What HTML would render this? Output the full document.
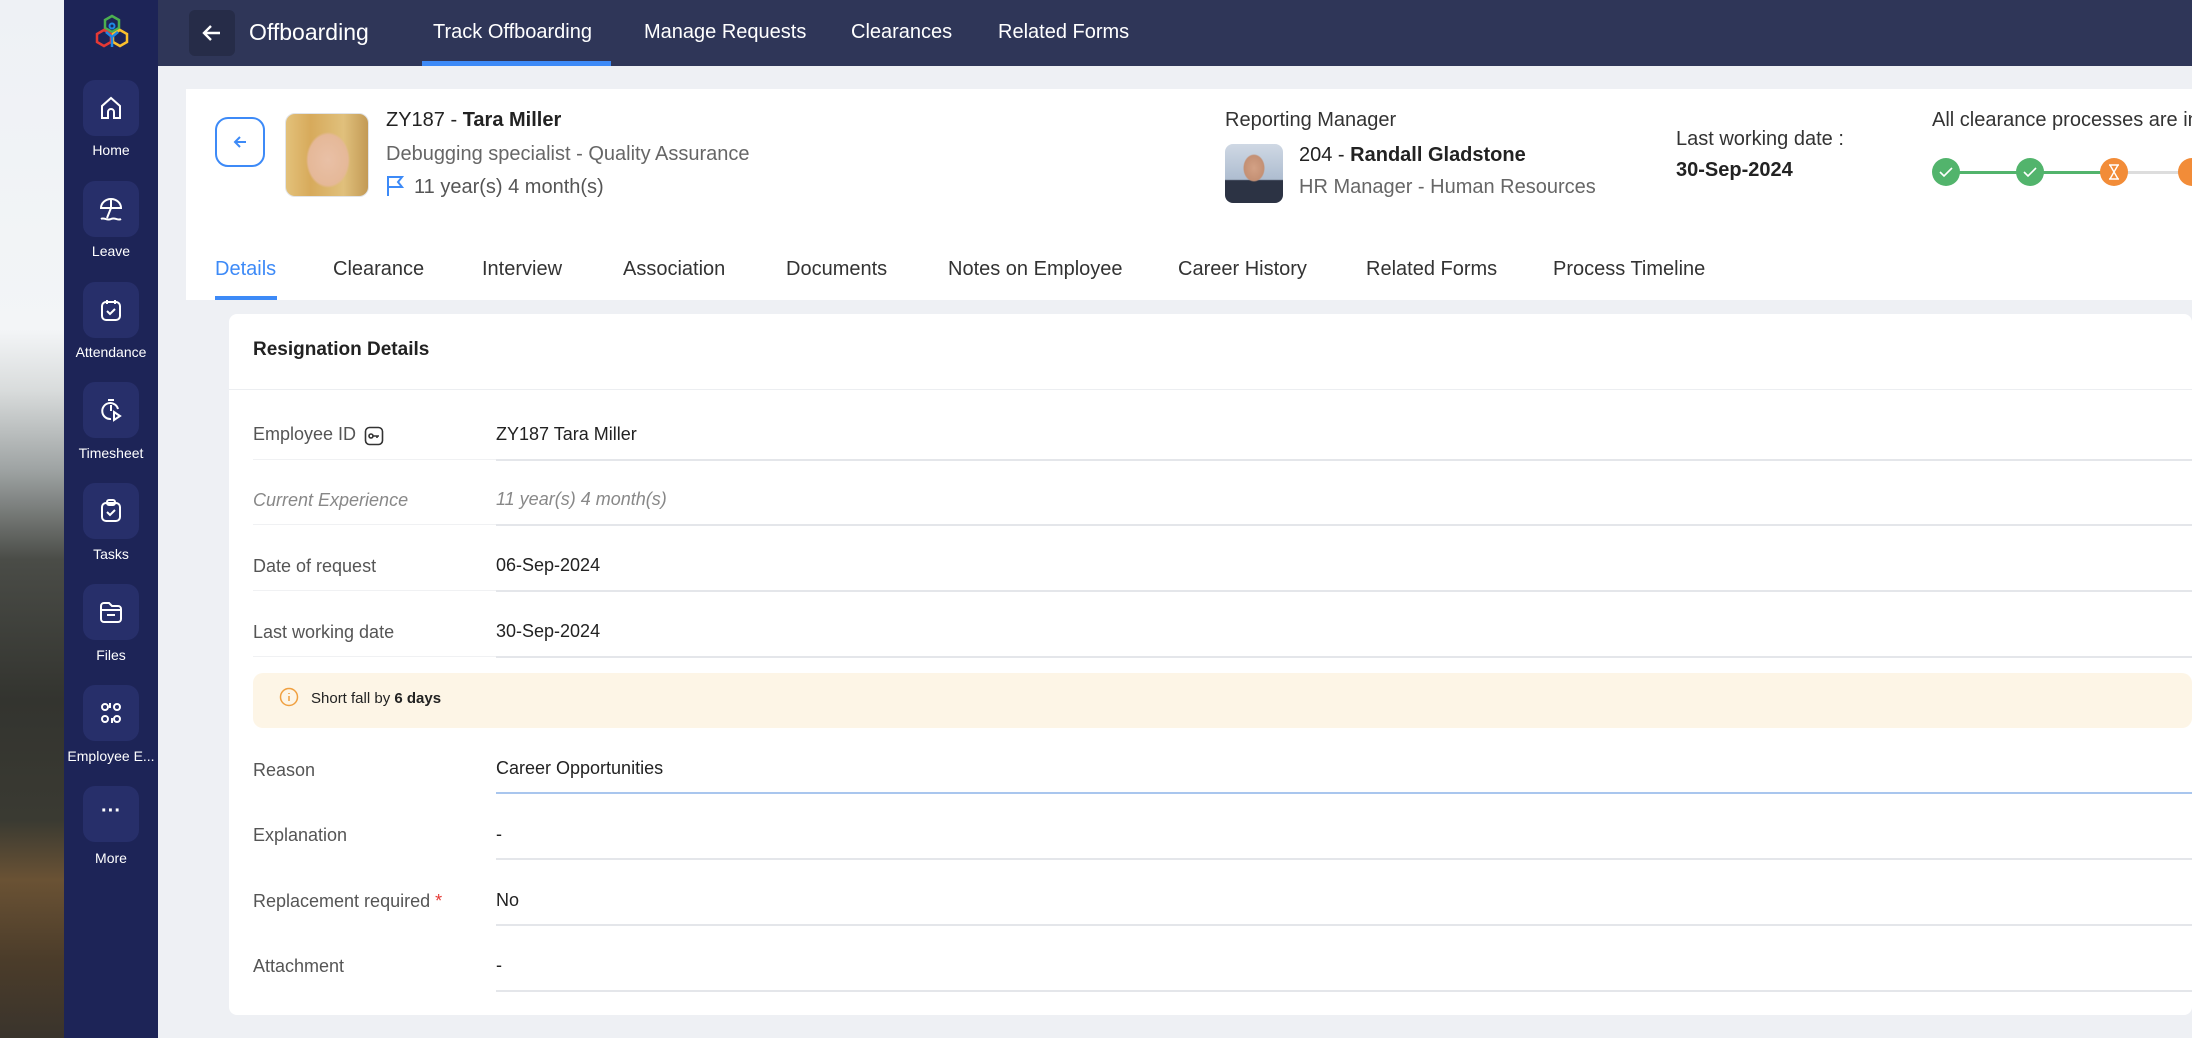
<!DOCTYPE html>
<html><head><meta charset="utf-8"><style>
*{margin:0;padding:0;box-sizing:border-box}
body{width:2192px;height:1038px;overflow:hidden;position:relative;font-family:"Liberation Sans",sans-serif;background:#eef0f4}
.a{position:absolute}
.bgimg{left:0;top:0;width:64px;height:1038px;background:linear-gradient(180deg,#eef1f5 0,#f3f5f7 330px,#d9dcdc 390px,#9ea3a3 470px,#4a4c47 560px,#33342f 700px,#3a3a32 820px,#6a5234 880px,#4b3c2a 960px,#3a342c 1038px)}
.side{left:64px;top:0;width:94px;height:1038px;background:#1d2457}
.ib{left:83px;width:56px;height:56px;border-radius:12px;background:#272f6a}
.lbl{left:64px;width:94px;text-align:center;color:#fff;font-size:14px}
.top{left:158px;top:0;width:2034px;height:66px;background:#2f3658}
.tt{color:#fff;font-size:20px;top:21px}
.card{left:186px;top:89px;width:2006px;height:211px;background:#fff}
.tab{top:258px;font-size:20px;color:#333}
.row{left:253px;font-size:18px;color:#555}
.val{left:496px;font-size:18px;color:#222}
.ln{height:1px;background:#e4e6ea}
</style></head><body>
<div class="a bgimg"></div>
<div class="a side"></div>
<svg class="a" style="left:95px;top:14px" width="34" height="38" viewBox="0 0 34 38"><path d="M17 2l7 4v8l-7 4-7-4V6z" fill="none" stroke="#4caf50" stroke-width="2.5"/><path d="M9 16l7 4v8l-7 4-7-4v-8z" fill="none" stroke="#e53935" stroke-width="2.5"/><path d="M25 16l7 4v8l-7 4-7-4v-8z" fill="none" stroke="#fbc02d" stroke-width="2.5"/><circle cx="17" cy="12" r="2.5" fill="none" stroke="#1e88e5" stroke-width="2"/><path d="M11 18l6 5 6-5M17 23v10" fill="none" stroke="#1e88e5" stroke-width="2.5"/></svg>
<div class="a ib" style="top:80px"></div><svg class="a" style="left:98px;top:95px" width="26" height="26" viewBox="0 0 26 26" fill="none" stroke="#fff" stroke-width="2"><path d="M4 23V11l9-8 9 8v12h-6v-6a3 3 0 0 0-6 0v6z"/></svg><div class="a lbl" style="top:142px">Home</div>
<div class="a ib" style="top:181px"></div><svg class="a" style="left:98px;top:196px" width="26" height="26" viewBox="0 0 26 26" fill="none" stroke="#fff" stroke-width="2"><path d="M3 12a10 9 0 0 1 20 0zM13 3v9M13 12l-4 10M3 23c3-2 6 2 10 0s7 2 10 0"/></svg><div class="a lbl" style="top:243px">Leave</div>
<div class="a ib" style="top:282px"></div><svg class="a" style="left:98px;top:297px" width="26" height="26" viewBox="0 0 26 26" fill="none" stroke="#fff" stroke-width="2"><rect x="4" y="5" width="18" height="18" rx="4"/><path d="M9 3v4M17 3v4M9 14l3 3 5-5"/></svg><div class="a lbl" style="top:344px">Attendance</div>
<div class="a ib" style="top:382px"></div><svg class="a" style="left:98px;top:397px" width="26" height="26" viewBox="0 0 26 26" fill="none" stroke="#fff" stroke-width="2"><path d="M20 12a8 8 0 1 0-7 10M10 3h6M13 8v6M16 15l6 4-6 4z"/></svg><div class="a lbl" style="top:445px">Timesheet</div>
<div class="a ib" style="top:483px"></div><svg class="a" style="left:98px;top:498px" width="26" height="26" viewBox="0 0 26 26" fill="none" stroke="#fff" stroke-width="2"><rect x="4" y="5" width="18" height="18" rx="4"/><rect x="9" y="2" width="8" height="5" rx="2"/><path d="M9 14l3 3 5-5"/></svg><div class="a lbl" style="top:546px">Tasks</div>
<div class="a ib" style="top:584px"></div><svg class="a" style="left:98px;top:599px" width="26" height="26" viewBox="0 0 26 26" fill="none" stroke="#fff" stroke-width="2"><path d="M3 20V7a3 3 0 0 1 3-3h5l3 3h6a3 3 0 0 1 3 3v10a3 3 0 0 1-3 3H6a3 3 0 0 1-3-3zM3 11h20M9 16h8"/></svg><div class="a lbl" style="top:647px">Files</div>
<div class="a ib" style="top:685px"></div><svg class="a" style="left:98px;top:700px" width="26" height="26" viewBox="0 0 26 26" fill="none" stroke="#fff" stroke-width="2"><circle cx="7" cy="7" r="3"/><circle cx="19" cy="7" r="3"/><circle cx="7" cy="19" r="3"/><circle cx="19" cy="19" r="3"/><path d="M12 3v5M14 23v-5"/></svg><div class="a lbl" style="top:748px">Employee E...</div>
<div class="a ib" style="top:786px"></div><div class="a" style="left:64px;width:94px;top:800px;text-align:center;color:#fff;font-size:20px;font-weight:bold">···</div><div class="a lbl" style="top:850px">More</div>

<div class="a top"></div>
<div class="a" style="left:189px;top:10px;width:46px;height:46px;border-radius:6px;background:#262c48"></div>
<svg class="a" style="left:200px;top:21px" width="24" height="24" viewBox="0 0 24 24" fill="none" stroke="#fff" stroke-width="2.4"><path d="M20 12H5M11 5l-7 7 7 7"/></svg>
<div class="a tt" style="left:249px;top:19px;font-size:23px">Offboarding</div>
<div class="a tt" style="left:433px">Track Offboarding</div>
<div class="a" style="left:422px;top:61px;width:189px;height:5px;background:#3d8af7"></div>
<div class="a tt" style="left:644px">Manage Requests</div>
<div class="a tt" style="left:851px">Clearances</div>
<div class="a tt" style="left:998px">Related Forms</div>

<div class="a card"></div>
<div class="a" style="left:215px;top:117px;width:50px;height:50px;border:2px solid #3d8af7;border-radius:13px"></div>
<svg class="a" style="left:231px;top:133px" width="18" height="18" viewBox="0 0 18 18" fill="none" stroke="#3d8af7" stroke-width="2"><path d="M15 9H4M9 4L4 9l5 5"/></svg>
<div class="a" style="left:285px;top:113px;width:84px;height:84px;border-radius:10px;border:1px solid #e2e4e8;background:radial-gradient(ellipse 22px 28px at 42px 46px,#e9c0a6 0,#e5b898 90%,transparent 100%),linear-gradient(90deg,#e3c17a,#d7aa5b 30%,#e0c07c 70%,#c39a55);overflow:hidden"></div>
<div class="a" style="left:386px;top:109px;font-size:20px;color:#222">ZY187 - <b style="font-weight:600">Tara Miller</b></div>
<div class="a" style="left:386px;top:143px;font-size:20px;color:#666">Debugging specialist - Quality Assurance</div>
<svg class="a" style="left:386px;top:174px" width="20" height="24" viewBox="0 0 20 24" fill="none" stroke="#3d8af7" stroke-width="2"><path d="M2 2v20M2 3h14l-4 5 4 5H2"/></svg>
<div class="a" style="left:414px;top:176px;font-size:20px;color:#555">11 year(s) 4 month(s)</div>

<div class="a" style="left:1225px;top:109px;font-size:20px;color:#333">Reporting Manager</div>
<div class="a" style="left:1225px;top:144px;width:58px;height:59px;border-radius:8px;background:radial-gradient(ellipse 11px 14px at 29px 24px,#d3a185 0,#c49074 90%,transparent 100%),linear-gradient(180deg,#cfd8e4 0,#aebdd0 60%,#2c3344 62%,#2c3344 100%)"></div>
<div class="a" style="left:1299px;top:144px;font-size:20px;color:#222">204 - <b style="font-weight:600">Randall Gladstone</b></div>
<div class="a" style="left:1299px;top:176px;font-size:20px;color:#666">HR Manager - Human Resources</div>
<div class="a" style="left:1676px;top:128px;font-size:20px;color:#333">Last working date :</div>
<div class="a" style="left:1676px;top:159px;font-size:20px;color:#222;font-weight:bold">30-Sep-2024</div>
<div class="a" style="left:1932px;top:109px;font-size:20px;color:#333;white-space:nowrap">All clearance processes are in</div>
<div class="a" style="left:1946px;top:171px;width:84px;height:3px;background:#52b46c"></div>
<div class="a" style="left:2030px;top:171px;width:84px;height:3px;background:#52b46c"></div>
<div class="a" style="left:2114px;top:171px;width:80px;height:3px;background:#ddd"></div>
<svg class="a" style="left:1932px;top:158px" width="260" height="30" viewBox="0 0 260 30"><circle cx="14" cy="14" r="14" fill="#52b46c"/><path d="M8 14l4 4 8-8" stroke="#fff" stroke-width="1.6" fill="none"/><circle cx="98" cy="14" r="14" fill="#52b46c"/><path d="M92 14l4 4 8-8" stroke="#fff" stroke-width="1.6" fill="none"/><circle cx="182" cy="14" r="14" fill="#f28c38"/><path d="M177 7h10M177 21h10M178 7l4 7-4 7M186 7l-4 7 4 7" stroke="#fff" stroke-width="1.4" fill="none"/><circle cx="260" cy="14" r="14" fill="#f28c38"/></svg>

<div class="a tab" style="left:215px;color:#3d8af7">Details</div>
<div class="a" style="left:215px;top:296px;width:62px;height:4px;background:#3d8af7"></div>
<div class="a tab" style="left:333px">Clearance</div>
<div class="a tab" style="left:482px">Interview</div>
<div class="a tab" style="left:623px">Association</div>
<div class="a tab" style="left:786px">Documents</div>
<div class="a tab" style="left:948px">Notes on Employee</div>
<div class="a tab" style="left:1178px">Career History</div>
<div class="a tab" style="left:1366px">Related Forms</div>
<div class="a tab" style="left:1553px">Process Timeline</div>

<div class="a" style="left:215px;top:300px;width:1977px;height:738px;background:#eef0f4"></div>
<div class="a" style="left:229px;top:314px;width:1963px;height:701px;background:#fff;border-radius:8px"></div>
<div class="a" style="left:253px;top:339px;font-size:19px;color:#222;font-weight:bold">Resignation Details</div>
<div class="a ln" style="left:229px;top:389px;width:1963px;background:#eceef1"></div>

<div class="a row" style="top:424px">Employee ID</div>
<svg class="a" style="left:364px;top:426px" width="20" height="20" viewBox="0 0 20 20" fill="none" stroke="#333" stroke-width="1.6"><rect x="1.5" y="1.5" width="17" height="17" rx="4"/><circle cx="7" cy="10" r="2"/><path d="M9 10h6M13 10v2"/></svg>
<div class="a val" style="top:424px">ZY187 Tara Miller</div>
<div class="a ln" style="left:253px;top:459px;width:1939px;background:#f0f1f3"></div><div class="a ln" style="left:496px;top:459px;width:1696px;height:2px"></div>
<div class="a row" style="top:490px;font-style:italic;color:#888">Current Experience</div>
<div class="a val" style="top:489px;font-style:italic;color:#888">11 year(s) 4 month(s)</div>
<div class="a ln" style="left:253px;top:524px;width:1939px;background:#f0f1f3"></div><div class="a ln" style="left:496px;top:524px;width:1696px;height:2px"></div>
<div class="a row" style="top:556px">Date of request</div>
<div class="a val" style="top:555px">06-Sep-2024</div>
<div class="a ln" style="left:253px;top:590px;width:1939px;background:#f0f1f3"></div><div class="a ln" style="left:496px;top:590px;width:1696px;height:2px"></div>
<div class="a row" style="top:622px">Last working date</div>
<div class="a val" style="top:621px">30-Sep-2024</div>
<div class="a ln" style="left:253px;top:656px;width:1939px;background:#f0f1f3"></div><div class="a ln" style="left:496px;top:656px;width:1696px;height:2px"></div>
<div class="a" style="left:253px;top:673px;width:1939px;height:55px;background:#fdf5e6;border-radius:10px"></div>
<svg class="a" style="left:279px;top:687px" width="20" height="20" viewBox="0 0 20 20" fill="none" stroke="#f0a040" stroke-width="1.5"><circle cx="10" cy="10" r="8.5"/><path d="M10 9v5M10 6v1"/></svg>
<div class="a" style="left:311px;top:690px;font-size:15px;color:#222">Short fall by <b>6 days</b></div>
<div class="a row" style="top:760px">Reason</div>
<div class="a val" style="top:758px">Career Opportunities</div>
<div class="a ln" style="left:496px;top:792px;width:1696px;height:2px;background:#a9c6ee"></div>
<div class="a row" style="top:825px">Explanation</div>
<div class="a val" style="top:824px">-</div>
<div class="a ln" style="left:496px;top:858px;width:1696px;height:2px"></div>
<div class="a row" style="top:891px">Replacement required<span style="color:#e53935"> *</span></div>
<div class="a val" style="top:890px">No</div>
<div class="a ln" style="left:496px;top:924px;width:1696px;height:2px"></div>
<div class="a row" style="top:956px">Attachment</div>
<div class="a val" style="top:955px">-</div>
<div class="a ln" style="left:496px;top:990px;width:1696px;height:2px"></div>
</body></html>
